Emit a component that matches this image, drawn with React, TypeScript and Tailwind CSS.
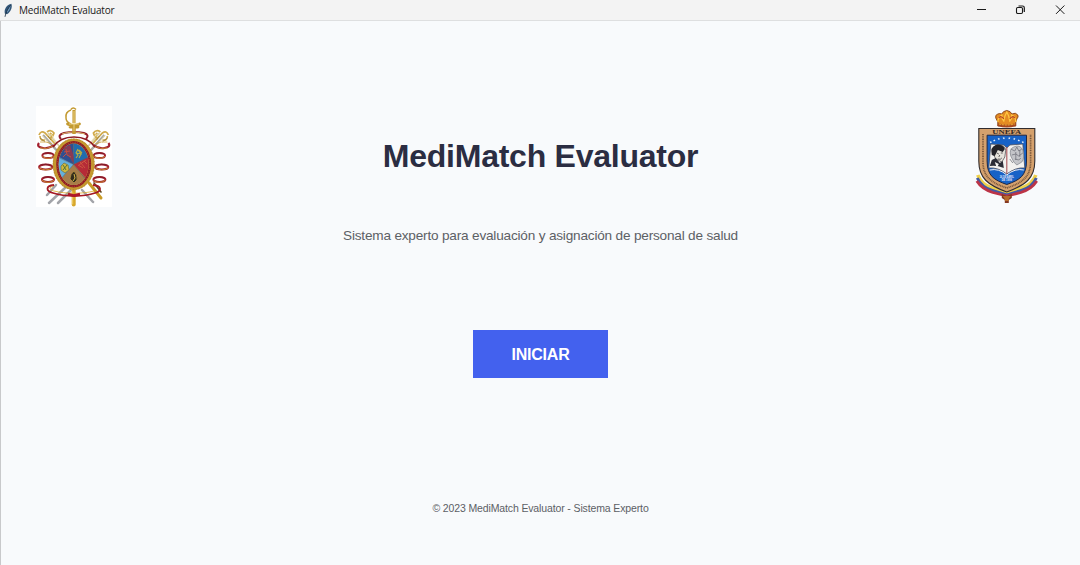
import React from "react";

function FeatherIcon() {
  return (
    <svg className="h-[15px] w-[10px]" viewBox="0 0 10 15" aria-hidden="true">
      <path d="M1.8 10.5C.8 6 3.8 1.6 8.4.7c1.1 3.5-.4 7.8-4.4 10.6z" fill="#315577" />
      <path d="M3.7 8.4 7.7 1.5C7.2 5 6.4 7.7 4 9.7z" fill="#79a4c9" />
      <path d="M2 13.8C2.5 10.4 4.6 5.8 7.7 2" fill="none" stroke="#172a3e" strokeWidth=".8" />
    </svg>
  );
}

function Loop({ x, y, r }: { x: number; y: number; r: number }) {
  return (
    <g fill="none">
      <ellipse cx={x} cy={y} rx={r} ry="2.5" fill="#fff" stroke="#a3202f" strokeWidth="2" />
      <path d={`M${x - r} ${y + 0.8}q${r} 4.2 ${r * 2} 0`} stroke="#c9932d" strokeWidth=".9" />
      <path d={`M${x - r + 1} ${y - 1.8}q${r - 1} -2 ${r * 2 - 2} 0`} stroke="#6f1a27" strokeWidth=".7" />
    </g>
  );
}

function SideOrnament() {
  return (
    <g fill="none">
      <path d="M7 29 23 47" stroke="#aaa99f" strokeWidth="2.4" />
      <path d="M12 27 24 41" stroke="#d9cfa5" strokeWidth="1.6" />
      <path d="M3 29q2-5 6-2l10 11M11 26q4-3 7 1-1 4-4 5l5 6M4 30q0 5 5 4M14 27q3 2 1 5" stroke="#d1ab4c" strokeWidth="1.7" />
      <path d="M6 29 12 36M15 28l6 9" stroke="#f1e5b9" strokeWidth=".9" />
      <path d="M4 32l5 4M12 30l3 4" stroke="#8d7441" strokeWidth=".7" />
      <path d="M3 37q-3 4 4 5 6 1 11-3" stroke="#a3202f" strokeWidth="2.1" />
      <path d="M4 36q6-1 12 2M4 42q7 2 13-2" stroke="#d0a23a" strokeWidth=".8" />
      <Loop x={12} y={49.5} r={5.6} />
      <Loop x={9.7} y={61} r={6.6} />
      <Loop x={12} y={73.5} r={6} />
    </g>
  );
}

function ArmyEmblem() {
  return (
    <svg className="h-[101px] w-[76px] bg-white" viewBox="0 0 76 101" role="img" aria-label="Emblema del sable y escudo">
      <g fill="none" strokeLinecap="round">
        <path d="M20 79 11 89M30 81 13 97M35 84 22 97" stroke="#a2a4a9" strokeWidth="2.5" />
        <path d="M46 84 57 96" stroke="#a2a4a9" strokeWidth="2.5" />
        <path d="M53 77 65 92" stroke="#c99b27" strokeWidth="3" />
        <path d="M58 77 65 86" stroke="#5f4820" strokeWidth="1.6" />
        <path d="M37.7 82V98.5" stroke="#d7a72b" strokeWidth="4" />
        <path d="M36.7 86v12" stroke="#f1d16a" strokeWidth="1" />
      </g>

      <SideOrnament />
      <g transform="matrix(-1 0 0 1 75.4 0)"><SideOrnament /></g>

      <g fill="none">
        <path d="M25 33q-4-4 3-6 10-2 20 0 6 2 2 6" stroke="#96202c" strokeWidth="2" />
        <path d="M26 28q11-4 23 0" stroke="#d8b96a" strokeWidth="1" />
        <path d="M17 41q7-10 21-10t21 10" stroke="#8d1822" strokeWidth="1.6" />
      </g>

      <ellipse cx="37.7" cy="58.3" rx="19.4" ry="24.2" fill="#d5aa3a" stroke="#c4982f" strokeWidth="3" />
      <ellipse cx="37.7" cy="58.3" rx="20.7" ry="25.4" fill="none" stroke="#9c7124" strokeWidth=".6" strokeDasharray="1 2" />
      <ellipse cx="37.7" cy="58.3" rx="16.3" ry="22" fill="#d9b54b" stroke="#8d1c26" strokeWidth="2.4" />
      <ellipse cx="37.7" cy="58.3" rx="16.3" ry="22" fill="none" stroke="#d36c32" strokeWidth=".6" strokeDasharray="1 1.4" />

      <clipPath id="ovalField"><ellipse cx="37.7" cy="58.3" rx="15" ry="20.7" /></clipPath>
      <g clipPath="url(#ovalField)">
        <path d="M37.5 58.5 19 50V35h18.5z" fill="#304f91" />
        <path d="M37.5 58.5V35h20v15z" fill="#216cac" />
        <path d="m37.5 58.5 20-10v21l-5 6z" fill="#b52b37" />
        <path d="m37.5 58.5 17 19-13 6H33l-13-6z" fill="#a77d4a" />
        <path d="M37.5 58.5 21 78l-4-30z" fill="#65b0dc" />
        <path d="m27 42 7-3 4 12v7z" fill="#8b3852" />
        <path d="M37.5 58.5 30 41M37.5 58.5V36M37.5 58.5l17-8M37.5 58.5l14 17M37.5 58.5l-15 17M37.5 58.5l-17-8" fill="none" stroke="#525b70" strokeWidth=".5" />
        <path d="m30 43 1 6 4 2m-7-5 6-1m-4 3-3 3" fill="none" stroke="#c35142" strokeWidth="1" />
        <path d="m42 43-2 4 2 2-2 3m2-8 3 4-2 4m-3-5 6 1m-3-4 3 3" fill="none" stroke="#b7ac40" strokeWidth="1.1" />
        <path d="m43 59 7-5m-6 2 5 6m-7-3 5 3m1-7 3 3" fill="none" stroke="#d36044" strokeWidth=".8" />
        <path d="m25 60 3-3 4 2 1 5-4 3-4-3z" fill="#cfb73d" stroke="#73713c" strokeWidth=".7" />
        <path d="m27 59 3 5m1-5-4 5" stroke="#52753b" />
        <path d="M34 73q0-5 4-8 4 4 3 9l-3 3z" fill="#312c1d" stroke="#c19b45" strokeWidth=".7" />
        <path d="m38 68 1 4-2 3" fill="none" stroke="#d7b94a" />
      </g>

      <path d="M18 79C9 80 10 85 17 87c12 4 31 4 42 0 7-2 7-7-2-8" fill="none" stroke="#a41824" strokeWidth="1.8" />
      <path d="M17 80c-5 2-3 4 1 5 12 3 29 3 40 0" fill="none" stroke="#dba92b" strokeWidth=".8" />
      <path d="m32 88 5.7 1.4L44 88" fill="none" stroke="#b1192a" strokeWidth="2.6" />

      <g fill="none" stroke="#c39a31">
        <path d="M38 4v13" strokeWidth="3.1" />
        <path d="M35 3.5q2-3 5 0M35 4q-6 2-5 8 0 4 5 6" strokeWidth="1.5" />
        <path d="M31.5 18q6 3 12 0M34 21h8" strokeWidth="2.8" strokeLinecap="round" />
        <path d="M38 20v8" strokeWidth="3.5" />
        <path d="M38 5v20M33 18h10" stroke="#f1d98e" strokeWidth=".9" />
      </g>
    </svg>
  );
}

function UnefaEmblem() {
  return (
    <svg className="h-[97px] w-[66px]" viewBox="0 0 66 97" role="img" aria-label="Escudo UNEFA">
      <g transform="translate(-.2 0)">
        <path d="m24 14-2-4q-1-3 2-4 2-1 4 0 1-3 5-3.5Q37 3 38 6q4-2 6 1 1 2-1 4l-1 3v4H24z" fill="#e48b22" stroke="#864215" strokeWidth=".9" />
        <path d="M24 14q0-4 4-7 0 4 2 6 1-6 3-9 2 3 3 9 2-2 2-6 4 2 4 7" fill="none" stroke="#ffc842" strokeWidth="1.3" />
        <path d="M24 15q9 3 18 0v3q-9 3-18 0z" fill="#a9481f" />
        <path d="M25 16q8 2 16 0" fill="none" stroke="#f5ba36" strokeDasharray="2 1" />
        <path d="M25 10q2-3 5 1m6 0q3-4 5-1" fill="none" stroke="#b33e25" strokeWidth="1.2" />

        <g fill="none" strokeLinejoin="round">
          <path d="M4 67q3 9 14 13l15 6 15-6q11-4 14-13" stroke="#eed04a" strokeWidth="3.6" />
          <path d="M3.5 70q4 9 15 12.5L33 87l14.5-4.5q11-3.5 15-12.5" stroke="#425aa4" strokeWidth="3" />
          <path d="M3 73q5 8 16 11.5l14 3.5 14-3.5Q58 81 63 73" stroke="#bc3447" strokeWidth="2.8" />
        </g>

        <path d="M5 20.5h56V53c0 17-9 24-28 31C14 77 5 70 5 53z" fill="#d5a16d" stroke="#302c2e" strokeWidth="1.1" />
        <path d="M9.2 26v28C9.2 69 18 75 33 80c15-5 23.8-11 23.8-26V26" fill="none" stroke="#75543a" strokeWidth="1.7" strokeDasharray="1 .7" />
        <path d="M13.3 27.2h39.4V53c0 15-7 19-19.7 23.5C20.3 72 13.3 68 13.3 53z" fill="#1762c7" stroke="#202743" strokeWidth="1" />
        <text x="33" y="25.9" textAnchor="middle" textLength="29" lengthAdjust="spacingAndGlyphs" fill="#352a26" fontFamily="Liberation Serif, serif" fontSize="5.8" fontWeight="700">UNEFA</text>
        <g fill="#eef6ff">
          {[[17,34],[20.5,32.3],[25,30.8],[30,30],[35.5,30],[40.5,30.8],[45,32.3],[49,34]].map(([x,y]) => (
            <path key={x} d={`m${x} ${y - 1} .4.7.8.1-.6.6.1.8-.7-.4-.7.4.1-.8-.6-.6.8-.1z`} />
          ))}
        </g>

        <path d="m17 36 13 1 3 3 3-3 13-1 2 24q-9-1-18 6-9-7-18-6z" fill="#f2f1ef" stroke="#454a5c" strokeWidth=".8" />
        <path d="M19 45q-1-7 5-8 7 0 8 5l-1 7-3 5-6-3z" fill="#e5e2db" stroke="#29272c" strokeWidth=".6" />
        <path d="M18 47q-2-8 4-10 7-1 9 4l-2 3-5-2-3 6z" fill="#242329" />
        <path d="m23 45 2 1m2-1h2m-3 2-1 2m-1 2q3 1 4-1" fill="none" stroke="#3e393b" strokeWidth=".8" />
        <path d="m16 58 2-6 4-2 4 5 3-2 1 7q-7-3-14-2z" fill="#2b2c36" />
        <path d="m21 54 4 2-2 4z" fill="#f3f2ef" />
        <path d="M37 48q-2-7 3-9 6-3 9 3 2 8-1 12l-5 3-3-3z" fill="#c4c5c9" stroke="#898c93" strokeWidth=".8" />
        <path d="m37 41 4 2 2-4 2 4 3-2M38 47l4-1 3 2 4-3m-8 6 4 1 2-2m-5-6v8m4-10v7M36 51l3 4" fill="none" stroke="#73757e" strokeWidth=".8" />
        <path d="M33 39v27" stroke="#a8555a" strokeWidth="1.1" />
        <path d="M16 62q9-2 17 5 8-7 17-5" fill="none" stroke="#f0eff3" strokeWidth="1" />
        <g fill="#e7edff" fontFamily="Liberation Sans, sans-serif" fontWeight="700" textAnchor="middle">
          <text x="33" y="70.3" fontSize="3" textLength="14" lengthAdjust="spacingAndGlyphs">26 DE ABRIL</text>
          <text x="33" y="73.2" fontSize="2.6">DE 1999</text>
        </g>

        <path d="m28 86 5 2 5-2v4l-3 2v3h-4v-3l-3-2z" fill="#843820" />
        <path d="M29 88h8l-2 3v2h-4v-2z" fill="#b76b2c" />
      </g>
    </svg>
  );
}

export default function App() {
  return (
    <div className="flex h-[565px] w-[1080px] flex-col overflow-hidden bg-[#f8fafc] font-['Liberation_Sans',Arial,sans-serif]">
      <header className="flex h-[21px] shrink-0 items-start justify-between border-b border-[#dedfe0] bg-[#f3f3f3]">
        <div className="flex h-5 items-center pl-[3px]">
          <FeatherIcon />
          <span className="ml-[6px] font-['Open_Sans',sans-serif] text-[10px] leading-5 tracking-[-0.18px] whitespace-nowrap text-[#191919]">MediMatch Evaluator</span>
        </div>
        <div className="flex h-5 items-center text-[#191919]">
          <button className="flex h-5 w-[39px] items-center justify-center" aria-label="Minimizar">
            <svg className="h-3 w-3" viewBox="0 0 12 12"><path d="M1 5.5h9" stroke="currentColor" /></svg>
          </button>
          <button className="flex h-5 w-[39px] items-center justify-center" aria-label="Restaurar">
            <svg className="h-3 w-3" viewBox="0 0 12 12" fill="none" stroke="currentColor">
              <rect x="1.5" y="3.5" width="6" height="6" rx="1.2" strokeWidth="1.1" />
              <path d="M3.5 2h4q1.8 0 1.8 1.8V8" strokeWidth="1.2" />
            </svg>
          </button>
          <button className="flex h-5 w-[40px] items-center justify-center" aria-label="Cerrar">
            <svg className="h-3 w-3" viewBox="0 0 12 12"><path d="m2 1.5 8.4 8.4m0-8.4L2 9.9" stroke="currentColor" /></svg>
          </button>
        </div>
      </header>
      <main className="flex min-h-0 flex-1 flex-col border-l border-[#c8c9cb]">
        <section className="flex items-start justify-between pt-[85px] pr-10 pl-[35px]">
          <ArmyEmblem />
          <div className="flex flex-col items-center pt-[30px] pr-[5px]">
            <h1 className="text-[32px] leading-[40px] font-bold tracking-[-0.25px] whitespace-nowrap text-[#2b2d42]">MediMatch Evaluator</h1>
            <p className="mt-[50px] text-[13.6px] leading-5 tracking-[-0.19px] whitespace-nowrap text-[#5c6065]">Sistema experto para evaluación y asignación de personal de salud</p>
          </div>
          <div className="pt-[2px]"><UnefaEmblem /></div>
        </section>
        <div className="mt-[84px] flex justify-center">
          <button className="h-12 w-[135px] bg-[#4361ee] pt-px text-[16px] font-bold tracking-[-0.2px] text-white">INICIAR</button>
        </div>
        <footer className="mt-[122px] text-center text-[10.5px] leading-4 tracking-[-0.13px] text-[#5c6065]">© 2023 MediMatch Evaluator - Sistema Experto</footer>
      </main>
    </div>
  );
}
